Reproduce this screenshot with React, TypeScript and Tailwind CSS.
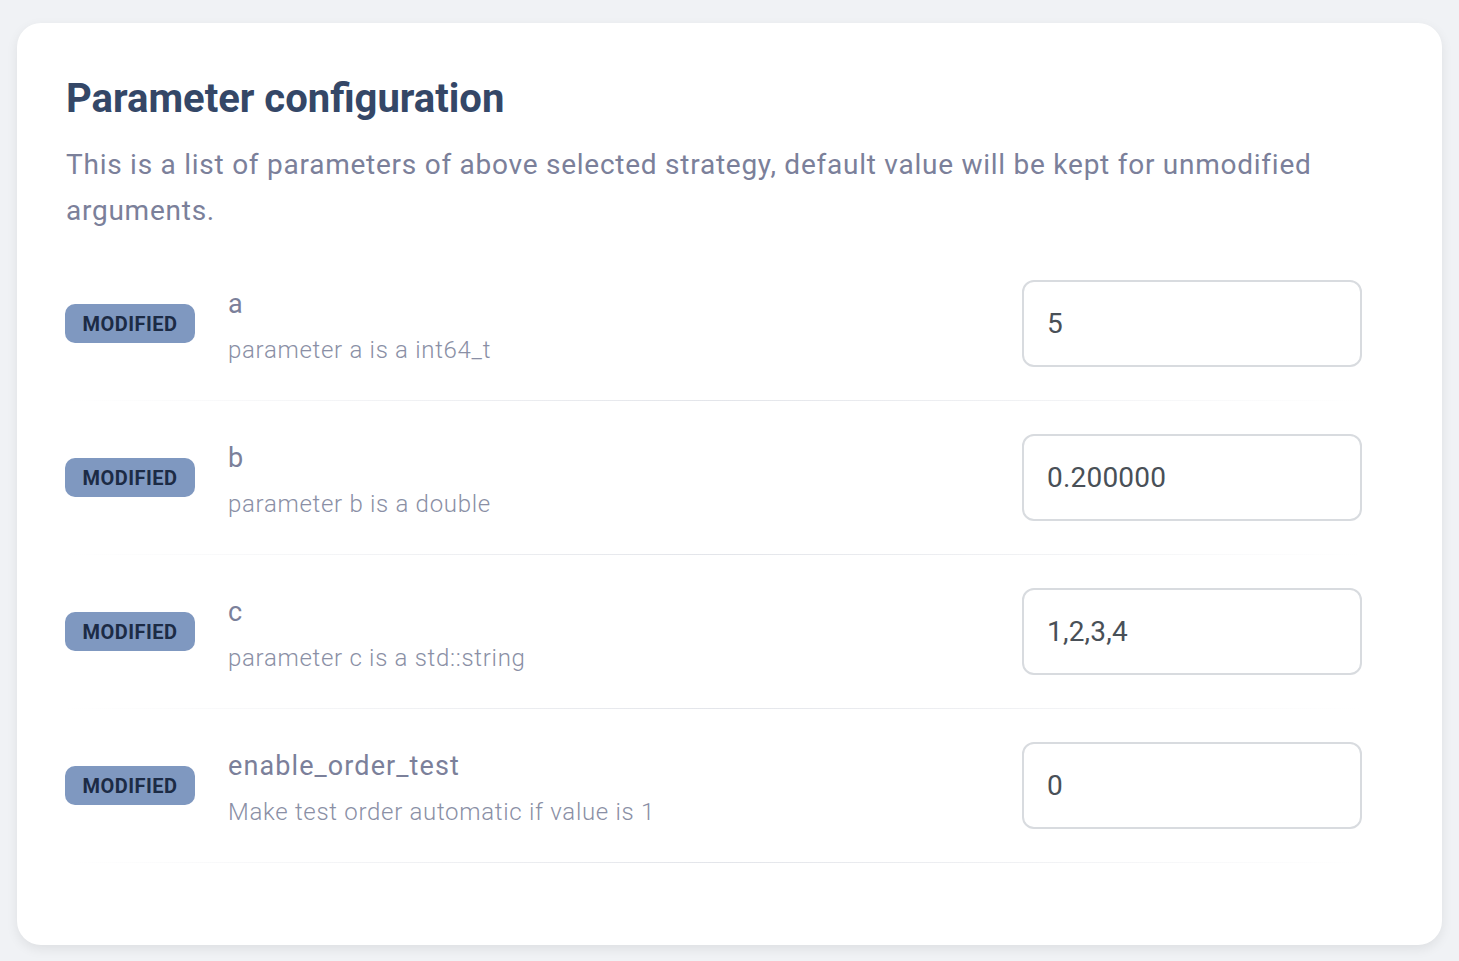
import React from "react";

type Param = {
    name: string
    description: string
    value: string
}

const params: Param[] = [
    { name: "a", description: "parameter a is a int64_t", value: "5" },
    { name: "b", description: "parameter b is a double", value: "0.200000" },
    { name: "c", description: "parameter c is a std::string", value: "1,2,3,4" },
    { name: "enable_order_test", description: "Make test order automatic if value is 1", value: "0" },
]

const Divider: React.FC = () => {
    return (
        <div className="h-px w-full bg-gradient-to-r from-transparent via-[#e3e5ea] to-transparent" />
    )
}

const ParamRow: React.FC<{ param: Param }> = ({ param }) => {
    const { name, description, value } = param
    return (
        <div className="flex flex-col">
            <div className="flex flex-row items-center">
                <div className="-ml-px w-[130px] h-[39px] rounded-[10px] bg-[#7f98c0] flex items-center justify-center text-[20px] font-bold text-[#1c2b45] tracking-[0.5px]">
                    MODIFIED
                </div>
                <div className="ml-[33px] flex-1 flex flex-col gap-y-[15px] mt-[5px]">
                    <div className="text-[27px] leading-[32px] text-[#7b809a] tracking-[1.1px]">{name}</div>
                    <div className="text-[24px] leading-[30px] font-light text-[#8a8fa5] tracking-[0.7px]">{description}</div>
                </div>
                <input
                    readOnly
                    value={value}
                    className="w-[340px] h-[87px] rounded-[12px] border-2 border-[#d8dbdf] px-[23px] text-[28px] tracking-[0.2px] text-[#495057] outline-none bg-white"
                />
            </div>
            <div className="my-[33px]">
                <Divider />
            </div>
        </div>
    )
}

export default function App() {
    return (
        <div className="min-h-screen bg-[#f0f2f5] pt-[23px] px-[17px] pb-[16px] font-['Roboto',sans-serif]">
            <div className="w-[1425px] bg-white rounded-[24px] shadow-[0_4px_12px_rgba(0,0,0,0.08)] pl-[49px] pr-[80px] pt-[52px] pb-[49px]">
                <h2 className="text-[40px] leading-[48px] font-bold text-[#344767]">Parameter configuration</h2>
                <p className="mt-[19px] text-[28px] leading-[46px] text-[#7b809a] tracking-[0.75px]">
                    This is a list of parameters of above selected strategy, default value will be kept for unmodified arguments.
                </p>
                <div className="mt-[46px] flex flex-col">
                    {params.map((item, index) => (
                        <ParamRow key={index} param={item} />
                    ))}
                </div>
            </div>
        </div>
    )
}
